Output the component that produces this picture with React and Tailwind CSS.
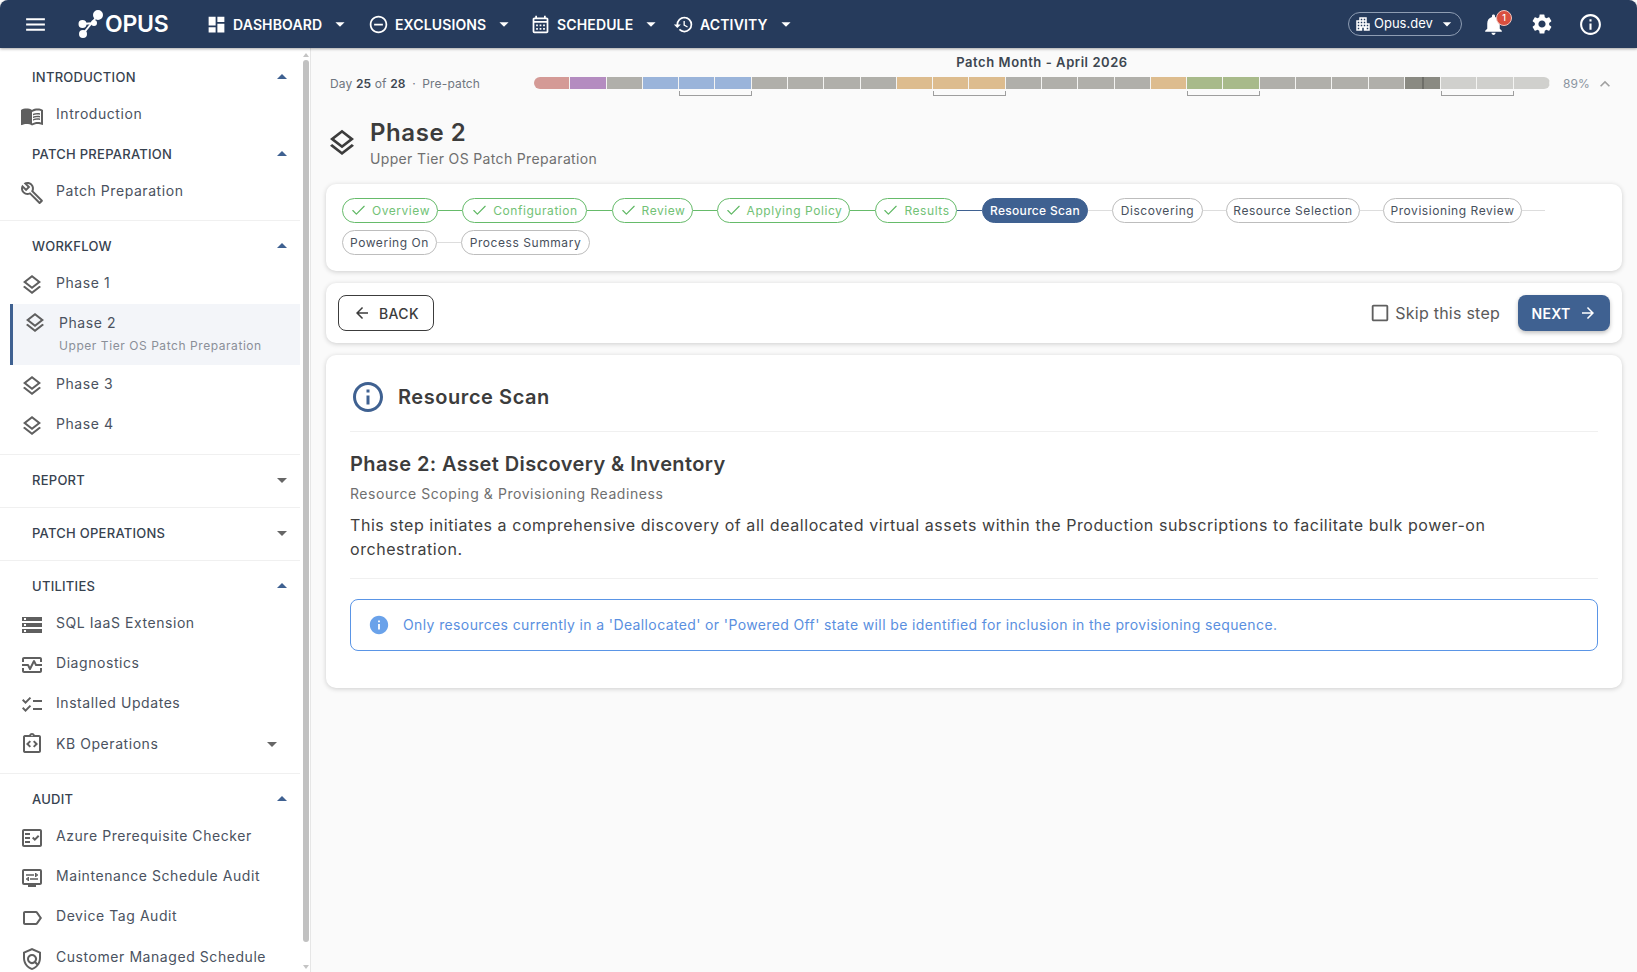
import {
  MdMenu, MdDashboard, MdRemoveCircleOutline, MdOutlineCalendarMonth, MdHistory, MdArrowDropDown, MdArrowDropUp,
  MdOutlineApartment, MdNotifications, MdSettings, MdInfoOutline, MdMenuBook, MdOutlineBuild, MdOutlineLayers,
  MdStorage, MdOutlineMonitorHeart, MdOutlineChecklist, MdOutlineIntegrationInstructions, MdOutlineFactCheck,
  MdOutlineLabel, MdOutlinePolicy, MdArrowBack, MdArrowForward, MdInfo, MdCheckBoxOutlineBlank,
  MdKeyboardArrowUp, MdOutlineDisplaySettings,
} from "react-icons/md";
import { Check } from "lucide-react";

const topNav = [
  { label: "DASHBOARD", icon: MdDashboard, box: "w-[162px]" },
  { label: "EXCLUSIONS", icon: MdRemoveCircleOutline, box: "w-[162px]" },
  { label: "SCHEDULE", icon: MdOutlineCalendarMonth, box: "w-[143px]" },
  { label: "ACTIVITY", icon: MdHistory, box: "w-[125px]" },
];

const segments = [
  "bg-[#d49a96]", "bg-[#b48cc0]", "bg-[#b0afaa]", "bg-[#9ab4da]", "bg-[#9ab4da]", "bg-[#9ab4da]", "bg-[#b0afaa]",
  "bg-[#b0afaa]", "bg-[#b0afaa]", "bg-[#b0afaa]", "bg-[#ddbc8e]", "bg-[#ddbc8e]", "bg-[#ddbc8e]", "bg-[#b0afaa]",
  "bg-[#b0afaa]", "bg-[#b0afaa]", "bg-[#b0afaa]", "bg-[#ddbc8e]", "bg-[#a8ba8a]", "bg-[#a8ba8a]", "bg-[#b0afaa]",
  "bg-[#b0afaa]", "bg-[#b0afaa]", "bg-[#b0afaa]", "bg-[#8a8a82]", "bg-[#d0d0cd]", "bg-[#d0d0cd]", "bg-[#d0d0cd]",
];

const steps = [
  { label: "Overview", state: "done", w: "w-[96px]", line: "w-[24px]", next: "bg-[#66bb6a]" },
  { label: "Configuration", state: "done", w: "w-[125px]", line: "w-[25px]", next: "bg-[#66bb6a]" },
  { label: "Review", state: "done", w: "w-[81px]", line: "w-[24px]", next: "bg-[#66bb6a]" },
  { label: "Applying Policy", state: "done", w: "w-[133px]", line: "w-[25px]", next: "bg-[#66bb6a]" },
  { label: "Results", state: "done", w: "w-[82px]", line: "w-[25px]", next: "bg-[#3f6191]" },
  { label: "Resource Scan", state: "active", w: "w-[106px]", line: "w-[24px]", next: "bg-[#dddddd]" },
  { label: "Discovering", state: "todo", w: "w-[91px]", line: "w-[23px]", next: "bg-[#dddddd]" },
  { label: "Resource Selection", state: "todo", w: "w-[134px]", line: "w-[23px]", next: "bg-[#dddddd]" },
  { label: "Provisioning Review", state: "todo", w: "w-[139px]", line: "w-[23px]", next: "bg-[#dddddd]" },
  { label: "Powering On", state: "todo", w: "w-[95px]", line: "w-[24px]", next: "bg-[#dddddd]" },
  { label: "Process Summary", state: "todo", w: "w-[129px]", line: "", next: "" },
];

function SectionHead({ label, open }) {
  return (
    <div className="flex h-[37px] items-center justify-between pr-[6px] pl-[32px] text-[13px] font-medium tracking-[0.02em] text-[#37424f]">
      <span className="pt-[2px]">{label}</span>
      {open ? <MdArrowDropUp size={24} className="text-[#3f6191]" /> : <MdArrowDropDown size={24} className="text-[#666666]" />}
    </div>
  );
}

function NavItem({ icon: Icon, label, caret }) {
  return (
    <div className="mb-[2px] flex h-[38px] items-center gap-3 pr-4 pl-5 text-[#4a5260]">
      <Icon size={24} className={`shrink-0 text-[#5f5f5f] ${caret ? "" : "translate-y-[2px]"}`} />
      <span className="flex-1 pb-[2px] text-[14px]">{label}</span>
      {caret && <MdArrowDropDown size={24} className="text-[#666666]" />}
    </div>
  );
}

function Section({ children, className = "pb-[9px]" }) {
  return <div className={`border-b border-[#f0f0f0] pt-[6px] ${className}`}>{children}</div>;
}

function Sidebar() {
  return (
    <aside className="flex w-[311px] shrink-0 border-r border-[#e6e6e6] bg-white">
      <nav className="w-[300px] shrink-0 overflow-hidden">
        <div className="border-b border-[#f0f0f0] pt-[10px] pb-2">
          <SectionHead label="INTRODUCTION" open />
          <NavItem icon={MdMenuBook} label="Introduction" />
          <SectionHead label="PATCH PREPARATION" open />
          <NavItem icon={MdOutlineBuild} label="Patch Preparation" />
        </div>
        <Section>
          <SectionHead label="WORKFLOW" open />
          <NavItem icon={MdOutlineLayers} label="Phase 1" />
          <div className="mt-px ml-[10px] flex h-[61px] gap-3 border-l-[3px] border-[#3f6191] bg-[#f3f5f9] pt-[7px] pl-[10px]">
            <MdOutlineLayers size={24} className="shrink-0 text-[#5f5f5f]" />
            <div className="pt-px">
              <div className="text-[14px] leading-[22px] text-[#4a5260]">Phase 2</div>
              <div className="mt-[2px] text-[12px] leading-[20px] text-[#8a8f98]">Upper Tier OS Patch Preparation</div>
            </div>
          </div>
          <NavItem icon={MdOutlineLayers} label="Phase 3" />
          <NavItem icon={MdOutlineLayers} label="Phase 4" />
        </Section>
        <Section>
          <SectionHead label="REPORT" />
        </Section>
        <Section>
          <SectionHead label="PATCH OPERATIONS" />
        </Section>
        <Section className="pb-[8px]">
          <SectionHead label="UTILITIES" open />
          <NavItem icon={MdStorage} label="SQL IaaS Extension" />
          <NavItem icon={MdOutlineMonitorHeart} label="Diagnostics" />
          <NavItem icon={MdOutlineChecklist} label="Installed Updates" />
          <div className="mt-[3px]">
            <NavItem icon={MdOutlineIntegrationInstructions} label="KB Operations" caret />
          </div>
        </Section>
        <div className="pt-[6px]">
          <SectionHead label="AUDIT" open />
          <NavItem icon={MdOutlineFactCheck} label="Azure Prerequisite Checker" />
          <NavItem icon={MdOutlineDisplaySettings} label="Maintenance Schedule Audit" />
          <NavItem icon={MdOutlineLabel} label="Device Tag Audit" />
          <div className="flex gap-3 pt-[8px] pr-4 pl-5 text-[#4a5260]">
            <MdOutlinePolicy size={24} className="shrink-0 translate-y-[2px] text-[#5f5f5f]" />
            <span className="text-[14px] leading-[24px]">Customer Managed Schedule Audit</span>
          </div>
        </div>
      </nav>
      <div className="flex w-[10px] flex-col items-center pt-[5px] pl-[2px]">
        <div className="h-0 w-0 border-x-[3px] border-b-[4px] border-x-transparent border-b-[#c4c4c4]" />
        <div className="mt-[3px] h-[882px] w-[6px] rounded-full bg-[#c1c1c1]" />
        <div className="mt-[23px] h-0 w-0 border-x-[3px] border-t-[4px] border-x-transparent border-t-[#c4c4c4]" />
      </div>
    </aside>
  );
}

function Header() {
  return (
    <header className="relative z-10 flex h-12 shrink-0 items-center rounded-t-[8px] bg-[#263b5c] text-white shadow-[0_1px_3px_rgba(0,0,0,0.35)]">
      <MdMenu size={25} className="ml-[23px] shrink-0" />
      <div className="ml-[30px] flex w-[128px] shrink-0 items-center">
        <svg width="27" height="28" viewBox="0 0 27 28" className="shrink-0">
          <g stroke="#ffffff" strokeWidth="2" fill="#ffffff">
            <line x1="20" y1="5" x2="5" y2="24" />
            <line x1="4" y1="14" x2="17" y2="13" />
            <circle cx="20" cy="5" r="4" />
            <circle cx="4.5" cy="14" r="3" />
            <circle cx="16" cy="13" r="2" />
            <circle cx="5" cy="24" r="3" />
          </g>
        </svg>
        <span className="text-[23px] leading-none font-semibold tracking-[-0.01em]">OPUS</span>
      </div>
      {topNav.map(({ label, icon: Icon, box }) => (
        <div key={label} className={`flex shrink-0 items-center ${box}`}>
          <Icon size={21} className="shrink-0" />
          <span className="ml-[6px] text-[14px] font-semibold tracking-[0.01em]">{label}</span>
          <MdArrowDropDown size={22} className="ml-[7px] shrink-0" />
        </div>
      ))}
      <div className="ml-auto flex h-[24px] w-[114px] items-center rounded-full border border-[#8e9db3] pl-[5px] text-[13px] tracking-normal">
        <MdOutlineApartment size={18} className="shrink-0" />
        <span className="ml-[2px]">Opus.dev</span>
        <MdArrowDropDown size={20} className="ml-[4px] shrink-0" />
      </div>
      <div className="relative ml-[19px]">
        <MdNotifications size={25} />
        <span className="absolute -top-[2px] left-[15px] flex h-[16px] w-[16px] items-center justify-center rounded-full border border-[#f0c4bd] bg-[#d94f3f] text-[9px] font-medium tracking-normal">1</span>
      </div>
      <MdSettings size={24} className="ml-[24px]" />
      <MdInfoOutline size={25} className="mr-[34px] ml-[24px]" />
    </header>
  );
}

function Timeline() {
  return (
    <div className="grid grid-cols-[204px_1016px_auto] gap-y-[6px] pt-[5px] pl-[19px]">
      <div className="col-start-2 text-center text-[13px] leading-[18px] font-semibold text-[#3d4650]">Patch Month - April 2026</div>
      <div className="col-start-1 row-start-2 text-[12px] leading-[14px] tracking-[0.012em] text-[#6f7680]">
        Day <b className="font-semibold text-[#3d4650]">25</b> of <b className="font-semibold text-[#3d4650]">28</b> <span className="mx-[3px]">·</span> Pre-patch
      </div>
      <div className="col-start-2 row-start-2">
        <div className="relative grid h-3 grid-cols-[repeat(28,minmax(0,1fr))] overflow-hidden rounded-full">
          {segments.map((color, i) => (
            <div key={i} className={`border-r border-[#f4f4f2] last:border-r-0 ${color}`} />
          ))}
          <div className="absolute top-0 bottom-0 left-[888px] w-[2px] bg-[#6e6e68]" />
        </div>
        <div className="mt-[2px] grid h-[5px] grid-cols-[repeat(28,minmax(0,1fr))]">
          <div className="col-span-2 col-start-5 border-x border-b border-[#9e9e9e]" />
          <div className="col-span-2 col-start-12 border-x border-b border-[#9e9e9e]" />
          <div className="col-span-2 col-start-19 border-x border-b border-[#9e9e9e]" />
          <div className="col-span-2 col-start-26 border-x border-b border-[#9e9e9e]" />
        </div>
      </div>
      <div className="row-start-2 ml-[13px] flex h-[14px] items-center text-[12px] tracking-[0.01em] text-[#8a94a0]">
        <span>89%</span>
        <MdKeyboardArrowUp size={20} className="ml-[5px] text-[#a0a0a0]" />
      </div>
    </div>
  );
}

function StepPill({ step }) {
  const base = "flex h-[25px] shrink-0 items-center justify-center gap-[5px] rounded-full border text-[12px]";
  if (step.state === "done") {
    return (
      <div className={`${base} ${step.w} border-[#66bb6a] text-[#72c276]`}>
        <Check size={17} strokeWidth={1.6} className="text-[#5db761]" />
        <span>{step.label}</span>
      </div>
    );
  }
  if (step.state === "active") {
    return <div className={`${base} ${step.w} border-[#3f6191] bg-[#3f6191] font-medium tracking-[0.025em] text-white`}>{step.label}</div>;
  }
  return <div className={`${base} ${step.w} border-[#bdbdbd] text-[#47505c]`}>{step.label}</div>;
}

function Stepper() {
  return (
    <div className="flex flex-wrap gap-y-[7px] rounded-[10px] bg-white pt-[14px] pr-4 pb-4 pl-4 shadow-[0_1px_5px_rgba(0,0,0,0.18)]">
      {steps.map((step) => (
        <div key={step.label} className="flex items-center">
          <StepPill step={step} />
          {step.line && <div className={`h-px ${step.line} ${step.next}`} />}
        </div>
      ))}
    </div>
  );
}

function Actions() {
  return (
    <div className="flex h-[60px] items-center justify-between rounded-[10px] bg-white px-3 shadow-[0_1px_5px_rgba(0,0,0,0.18)]">
      <button className="flex h-9 w-[96px] items-center justify-center gap-2 rounded-lg border border-[#3c3c3c] text-[14px] font-medium tracking-[0.03em] text-[#3c3c3c]">
        <MdArrowBack size={18} />
        BACK
      </button>
      <div className="flex items-center">
        <MdCheckBoxOutlineBlank size={22} className="text-[#5f5f5f]" />
        <span className="ml-[4px] text-[16px] tracking-[0.015em] text-[#5a5a5a]">Skip this step</span>
        <button className="ml-[18px] flex h-9 w-[92px] items-center justify-center gap-2 rounded-lg bg-[#3f6191] text-[14px] font-semibold tracking-[0.02em] text-white shadow-[0_2px_4px_rgba(0,0,0,0.25)]">
          NEXT
          <MdArrowForward size={18} />
        </button>
      </div>
    </div>
  );
}

function ResourceScan() {
  return (
    <section className="rounded-[10px] bg-white px-6 pt-6 pb-[37px] shadow-[0_1px_5px_rgba(0,0,0,0.18)]">
      <div className="flex items-center gap-3 border-b border-[#f0f0f0] pb-4">
        <MdInfoOutline size={36} className="text-[#3f6191]" />
        <h2 className="text-[20px] font-semibold text-[#3c3c3c]">Resource Scan</h2>
      </div>
      <h3 className="mt-[18px] text-[20px] leading-[28px] font-semibold tracking-[0.02em] text-[#3c3c3c]">Phase 2: Asset Discovery &amp; Inventory</h3>
      <p className="mt-[6px] text-[14px] leading-5 text-[#6f6f6f]">Resource Scoping &amp; Provisioning Readiness</p>
      <p className="mt-[9px] border-b border-[#f0f0f0] pb-[17px] text-[16px] leading-6 text-[#404040]">
        This step initiates a comprehensive discovery of all deallocated virtual assets within the Production subscriptions to facilitate bulk power-on orchestration.
      </p>
      <div className="mt-5 flex h-[52px] items-center gap-[13px] rounded-lg border border-[#5a95e6] pl-[17px]">
        <MdInfo size={22} className="text-[#6aa2ea]" />
        <span className="pb-[2px] text-[14px] tracking-[0.027em] text-[#5a8fe0]">Only resources currently in a 'Deallocated' or 'Powered Off' state will be identified for inclusion in the provisioning sequence.</span>
      </div>
    </section>
  );
}

export default function App() {
  return (
    <div className="flex h-screen flex-col overflow-hidden bg-white tracking-[0.035em] [font-family:Inter,sans-serif]">
      <Header />
      <div className="flex min-h-0 flex-1">
        <Sidebar />
        <main className="min-w-0 flex-1 overflow-hidden bg-[#fafafa]">
          <Timeline />
          <div className="px-[15px]">
            <div className="mt-[21px] mb-[15px] flex items-center gap-3">
              <MdOutlineLayers size={32} className="text-[#3c3c3c]" />
              <div>
                <h1 className="text-[24px] leading-8 font-semibold text-[#3c3c3c]">Phase 2</h1>
                <p className="text-[14px] leading-5 tracking-[0.025em] text-[#6f6f6f]">Upper Tier OS Patch Preparation</p>
              </div>
            </div>
            <div className="flex flex-col gap-3">
              <Stepper />
              <Actions />
              <ResourceScan />
            </div>
          </div>
        </main>
      </div>
    </div>
  );
}
